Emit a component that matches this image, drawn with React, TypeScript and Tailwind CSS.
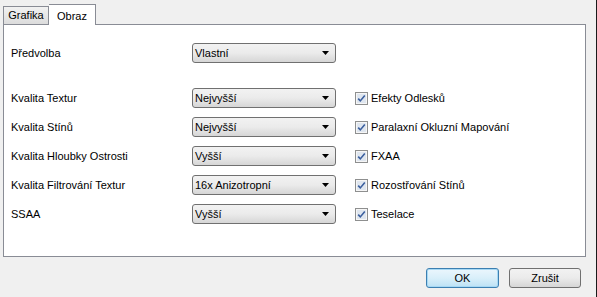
import React from 'react';

const font = { fontFamily: '"Liberation Sans", Arial, sans-serif' };

const Combo: React.FC<{ value: string }> = ({ value }) => (
  <div className="flex items-center justify-between w-[144px] h-[20px] border border-[#707070] rounded-[3px] bg-gradient-to-b from-[#f2f2f2] via-[#ebebeb] to-[#d6d6d6] pl-[2px] pr-[6px] text-[11px] text-black">
    <span>{value}</span>
    <svg width="7" height="4" viewBox="0 0 7 4">
      <path d="M0 0H7L3.5 4Z" fill="#000" />
    </svg>
  </div>
);

const Check: React.FC<{ label: string }> = ({ label }) => (
  <div className="flex items-center gap-[3px] text-[11px] text-black">
    <svg width="13" height="13" viewBox="0 0 13 13">
      <rect x="0.5" y="0.5" width="12" height="12" fill="#f6f6f6" stroke="#8e8f8f" />
      <rect x="2" y="2" width="9" height="9" fill="#dfe6ef" />
      <path d="M3.2 6.6L5.3 8.9L9.8 3.4" fill="none" stroke="#3a5e9e" strokeWidth="1.6" />
    </svg>
    <span>{label}</span>
  </div>
);

const rows = [
  { label: 'Kvalita Textur', value: 'Nejvyšší', check: 'Efekty Odlesků' },
  { label: 'Kvalita Stínů', value: 'Nejvyšší', check: 'Paralaxní Okluzní Mapování' },
  { label: 'Kvalita Hloubky Ostrosti', value: 'Vyšší', check: 'FXAA' },
  { label: 'Kvalita Filtrování Textur', value: '16x Anizotropní', check: 'Rozostřování Stínů' },
  { label: 'SSAA', value: 'Vyšší', check: 'Teselace' },
];

const App: React.FC = () => {
  return (
    <div
      className="w-[597px] h-[297px] bg-[#f0f0f0] border-r border-[#1a1a1a] pt-[4px] pl-[3px] flex flex-col"
      style={font}
    >
      <div className="flex items-end h-[21px] relative z-10">
        <div className="w-[46px] h-[18px] border border-b-0 border-[#898c95] bg-gradient-to-b from-[#f2f2f2] to-[#dcdcdc] text-[11px] text-black flex items-center justify-center mb-[1px]">
          Grafika
        </div>
        <div className="w-[47px] h-[21px] border border-b-0 border-l-0 border-[#898c95] bg-white text-[11px] text-black flex items-start justify-center pt-[3px]">
          Obraz
        </div>
      </div>
      <div className="-mt-px w-[583px] h-[233px] border border-[#898c95] bg-white pl-[7px] pt-[18px] text-[11px] text-black">
        <div className="flex items-center h-[20px]">
          <span className="w-[181px]">Předvolba</span>
          <Combo value="Vlastní" />
        </div>
        <div className="flex flex-col gap-[9px] mt-[25px]">
          {rows.map((r, i) => (
            <div key={i} className="flex items-center h-[20px]">
              <span className="w-[181px]">{r.label}</span>
              <Combo value={r.value} />
              <div className="ml-[19px]">
                <Check label={r.check} />
              </div>
            </div>
          ))}
        </div>
      </div>
      <div className="flex justify-end gap-[10px] pr-[15px] mt-[11px]">
        <button className="w-[73px] h-[20px] rounded-[3px] border border-[#3c7fb1] bg-gradient-to-b from-[#ebf6fd] via-[#d9effa] to-[#bde2f5] text-[11px] text-black shadow-[inset_0_0_0_1px_#a6d8f4]">
          OK
        </button>
        <button className="w-[72px] h-[20px] rounded-[3px] border border-[#707070] bg-gradient-to-b from-[#f2f2f2] via-[#ebebeb] to-[#d6d6d6] text-[11px] text-black">
          Zrušit
        </button>
      </div>
    </div>
  );
};

export default App;
